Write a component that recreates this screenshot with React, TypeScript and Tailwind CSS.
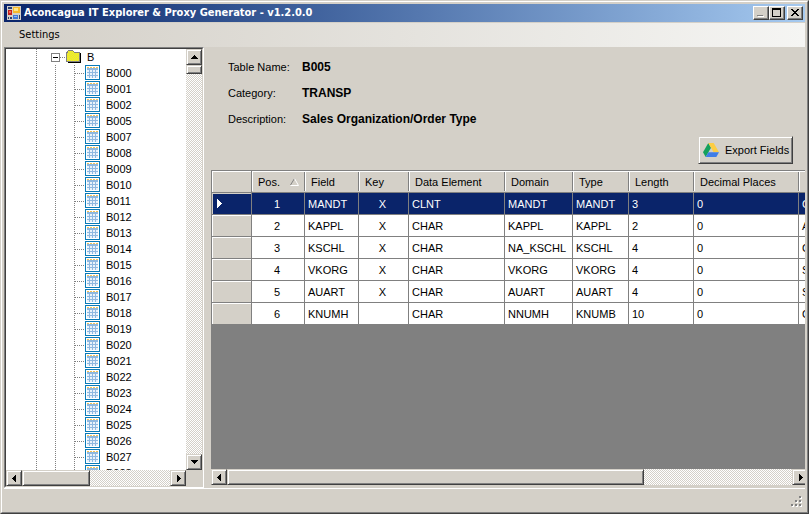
import type { ReactNode } from "react";

const tables = [
  "B000", "B001", "B002", "B005", "B007", "B008", "B009", "B010", "B011", "B012",
  "B013", "B014", "B015", "B016", "B017", "B018", "B019", "B020", "B021", "B022",
  "B023", "B024", "B025", "B026", "B027", "B028",
];

const columns = [
  { label: "Pos.", width: "w-[53px]", center: true },
  { label: "Field", width: "w-[54px]", center: false },
  { label: "Key", width: "w-[50px]", center: true },
  { label: "Data Element", width: "w-[96px]", center: false },
  { label: "Domain", width: "w-[68px]", center: false },
  { label: "Type", width: "w-[56px]", center: false },
  { label: "Length", width: "w-[65px]", center: false },
  { label: "Decimal Places", width: "w-[105px]", center: false },
  { label: "", width: "w-[120px]", center: false },
];

const rows = [
  ["1", "MANDT", "X", "CLNT", "MANDT", "MANDT", "3", "0", "C"],
  ["2", "KAPPL", "X", "CHAR", "KAPPL", "KAPPL", "2", "0", "A"],
  ["3", "KSCHL", "X", "CHAR", "NA_KSCHL", "KSCHL", "4", "0", "C"],
  ["4", "VKORG", "X", "CHAR", "VKORG", "VKORG", "4", "0", "S"],
  ["5", "AUART", "X", "CHAR", "AUART", "AUART", "4", "0", "S"],
  ["6", "KNUMH", "", "CHAR", "NNUMH", "KNUMB", "10", "0", "C"],
];

const details = [
  { label: "Table Name:", value: "B005" },
  { label: "Category:", value: "TRANSP" },
  { label: "Description:", value: "Sales Organization/Order Type" },
];

const raised =
  "border border-t-[#d4d0c8] border-l-[#d4d0c8] border-r-[#404040] border-b-[#404040] bg-[#d4d0c8] shadow-[inset_1px_1px_0_#fff,inset_-1px_-1px_0_#808080]";
const track = "bg-[repeating-conic-gradient(#fff_0_25%,#d4d0c8_0_50%)] bg-[length:2px_2px]";

function TitleButton({ label, children }: { label: string; children: ReactNode }) {
  return (
    <button
      type="button"
      aria-label={label}
      className="flex h-[14px] w-4 items-center justify-center border border-t-white border-l-white border-r-[#404040] border-b-[#404040] bg-[#d4d0c8] shadow-[inset_-1px_-1px_0_#808080]"
    >
      <svg width="12" height="10" viewBox="0 0 12 10" shapeRendering="crispEdges">
        {children}
      </svg>
    </button>
  );
}

const arrowPaths = {
  up: "M4 2h1v1h1v1h1v1h1v1H1V5h1V4h1V3h1z",
  down: "M1 2h7v1H7v1H6v1H5v1H4V5H3V4H2V3H1z",
  left: "M5 1h1v7H5V7H4V6H3V5H2V4h1V3h1V2h1z",
  right: "M3 1h1v1h1v1h1v1h1v1H6v1H5v1H4v1H3z",
};

function ArrowButton({ direction }: { direction: keyof typeof arrowPaths }) {
  return (
    <button
      type="button"
      aria-label={`Scroll ${direction}`}
      className={`flex size-4 shrink-0 items-center justify-center ${raised}`}
    >
      <svg width="9" height="9" viewBox="0 0 9 9" className="shrink-0" shapeRendering="crispEdges">
        <path d={arrowPaths[direction]} />
      </svg>
    </button>
  );
}

function AppIcon() {
  return (
    <svg width="14" height="14" viewBox="0 0 14 14" shapeRendering="crispEdges" className="shrink-0">
      <path fill="#d4d0c8" d="M0 0h14v14H0z" />
      <path fill="#2c3f70" d="M1 1h4v2H1zM1 11h1v2H1zM3 11h2v2H3zM12 9h1v4h-1z" />
      <path fill="#c8201c" d="M1 4h4v5H1z" />
      <path fill="#ee6a5c" d="M2 5h2v2H2z" />
      <path fill="#f6b92c" d="M6 1h7v6H6z" />
      <path fill="#fde48a" d="M7 2h4v3H7z" />
      <path fill="#3f78d8" d="M6 9h5v4H6z" />
      <path fill="#8fb8f4" d="M7 10h3v1H7z" />
    </svg>
  );
}

function FolderIcon() {
  return (
    <svg width="16" height="14" viewBox="0 0 16 14" shapeRendering="crispEdges" className="shrink-0">
      <defs>
        <pattern id="folder-fill" width="2" height="2" patternUnits="userSpaceOnUse">
          <path fill="#ffff00" d="M0 0h2v2H0z" />
          <path fill="#d8d460" d="M0 0h1v1H0zM1 1h1v1H1z" />
        </pattern>
      </defs>
      <path fill="#000" d="M14 3h1v10H2v-1h12z" />
      <path fill="#808080" d="M0 2h1V1h1V0h5v1h1v1h6v10H0z" />
      <path fill="url(#folder-fill)" d="M1 3h1V1h5v1h1v1h5v8H1z" />
    </svg>
  );
}

function TableIcon() {
  return (
    <svg width="15" height="15" viewBox="0 0 15 15" shapeRendering="crispEdges" className="shrink-0 self-start">
      <path fill="#0a7bb8" d="M0 0h15v15H0z" />
      <path fill="#fff" d="M1 1h13v13H1z" />
      <path fill="#eaf2fa" d="M2 5h11v8H2z" />
      <path fill="#8fb8e0" d="M2 3h11v2H2zM2 7h11v1H2zM2 10h11v1H2zM4 5h1v8H4zM7 5h1v8H7zM10 5h1v8h-1z" />
      <path fill="#f4c255" d="M2 2h2v1H2zM5 2h2v1H5zM8 2h2v1H8zM11 2h2v1h-2z" />
    </svg>
  );
}

function DriveIcon() {
  return (
    <svg width="16" height="14" viewBox="0 0 16 14" className="shrink-0">
      <path fill="#14a05c" d="M5.3 0L0 9.3 2.7 14 8 4.7z" />
      <path fill="#fdcd43" d="M5.3 0h5.4L16 9.3h-5.4z" />
      <path fill="#3f7de8" d="M5.4 9.3H16L13.3 14H2.7z" />
    </svg>
  );
}

const dotsDown = "bg-[repeating-linear-gradient(to_bottom,#808080_0_1px,transparent_1px_2px)]";
const dotsAcross = "bg-[repeating-linear-gradient(to_right,#808080_0_1px,transparent_1px_2px)]";

function TreeView() {
  return (
    <nav
      aria-label="Tables"
      className="flex w-[200px] shrink-0 flex-col border border-t-[#808080] border-l-[#808080] border-r-white border-b-white"
    >
      <div className="flex min-h-0 flex-1 flex-col border border-t-[#404040] border-l-[#404040] border-r-[#d4d0c8] border-b-[#d4d0c8]">
        <div className="flex min-h-0 flex-1">
          <div className="flex min-w-0 flex-1 overflow-hidden bg-white pl-[30px]">
            <div className={`w-px shrink-0 ${dotsDown}`} />
            <ul role="tree" className="ml-[14px]">
              <li role="treeitem" aria-expanded="true">
                <div className="flex h-4 items-center">
                  <button
                    type="button"
                    aria-label="Collapse B"
                    className="flex size-[9px] items-center justify-center border border-[#808080] bg-white"
                  >
                    <span className="h-px w-[5px] bg-black" />
                  </button>
                  <span className={`h-px w-[6px] ${dotsAcross}`} />
                  <FolderIcon />
                  <span className="pl-[5px]">B</span>
                </div>
                <div className="flex pl-1">
                  <div className={`w-px ${dotsDown}`} />
                  <ul role="group" className="ml-[18px] flex">
                    <li role="none" className={`w-px ${dotsDown}`} />
                    <li role="none">
                      <ul role="group">
                        {tables.map((name) => (
                          <li key={name} role="treeitem" className="flex h-4 items-center">
                            <span className={`h-px w-[10px] ${dotsAcross}`} />
                            <TableIcon />
                            <span className="pl-[6px]">{name}</span>
                          </li>
                        ))}
                      </ul>
                    </li>
                  </ul>
                </div>
              </li>
            </ul>
          </div>
          <div className={`flex w-4 shrink-0 flex-col ${track}`}>
            <ArrowButton direction="up" />
            <div className={`h-[9px] ${raised}`} />
            <div className="flex-1" />
            <ArrowButton direction="down" />
          </div>
        </div>
        <div className="flex h-4 shrink-0">
          <div className={`flex flex-1 ${track}`}>
            <ArrowButton direction="left" />
            <div className={`w-[68px] ${raised}`} />
            <div className="flex-1" />
            <ArrowButton direction="right" />
          </div>
          <div className="w-4 bg-[#d4d0c8]" />
        </div>
      </div>
    </nav>
  );
}

function FieldGrid() {
  return (
    <div className="flex min-h-0 flex-1 flex-col overflow-hidden">
      <div className="min-h-0 flex-1 overflow-hidden border-t border-l border-[#808080] bg-[#808080]">
        <table className="w-[707px] table-fixed border-separate border-spacing-0">
          <thead>
            <tr className="h-[22px]">
              <td className="w-10 border-r border-b border-[#808080] bg-[#d4d0c8] p-0 shadow-[inset_1px_1px_0_#fff]" />
              {columns.map((column, index) => (
                <th
                  key={index}
                  scope="col"
                  className={`${column.width} border-b border-[#808080] bg-[#d4d0c8] p-0 text-left font-normal shadow-[inset_0_1px_0_#fff]`}
                >
                  <div className="flex h-[19px] items-center justify-between border-r border-[#808080] pr-[5px] pl-[6px] shadow-[inset_1px_0_0_#fff]">
                    <span className="whitespace-nowrap">{column.label}</span>
                    {index === 0 && (
                      <svg width="9" height="8" viewBox="0 0 9 8" aria-label="Sorted ascending">
                        <path d="M4.5 0.5L0.5 7" stroke="#808080" fill="none" />
                        <path d="M4.5 0.5L8.5 7.5H0.5" stroke="#fff" fill="none" />
                      </svg>
                    )}
                  </div>
                </th>
              ))}
            </tr>
          </thead>
          <tbody>
            {rows.map((row, rowIndex) => (
              <tr
                key={row[0]}
                aria-selected={rowIndex === 0}
                className={rowIndex === 0 ? "h-[22px] bg-[#0a246a] text-white" : "h-[22px] bg-white"}
              >
                <td
                  className={
                    rowIndex === 0
                      ? "border-r border-b border-[#808080] p-0 shadow-[inset_1px_1px_0_#d4d0c8]"
                      : "border-r border-b border-[#808080] bg-[#d4d0c8] p-0 shadow-[inset_1px_1px_0_#fff]"
                  }
                >
                  {rowIndex === 0 && (
                    <svg width="5" height="9" viewBox="0 0 5 9" shapeRendering="crispEdges" className="ml-[5px]">
                      <path fill="#fff" d="M0 0h1v1h1v1h1v1h1v1h1v1H4v1H3v1H2v1H1v1H0z" />
                    </svg>
                  )}
                </td>
                {row.map((cell, index) => (
                  <td
                    key={index}
                    className={
                      columns[index].center
                        ? "border-r border-b border-[#808080] py-0 pr-[2px] pl-0 text-center"
                        : "border-r border-b border-[#808080] py-0 pr-0 pl-[3px]"
                    }
                  >
                    {cell}
                  </td>
                ))}
              </tr>
            ))}
          </tbody>
        </table>
      </div>
      <div className={`-mr-[3px] flex h-4 shrink-0 ${track}`}>
        <ArrowButton direction="left" />
        <div className={`w-[417px] ${raised}`} />
        <div className="flex-1" />
        <ArrowButton direction="right" />
      </div>
    </div>
  );
}

export default function App() {
  return (
    <div className="h-screen overflow-hidden border border-t-[#d4d0c8] border-l-[#d4d0c8] border-r-[#404040] border-b-[#404040] bg-[#d4d0c8] font-['Liberation_Sans',Arial,sans-serif] text-[11px] leading-[16px] text-black">
      <div className="flex h-full flex-col border border-t-white border-l-white border-r-[#808080] border-b-[#808080] p-[2px]">
        <header className="flex h-[18px] shrink-0 items-center bg-linear-to-r from-[#0a246a] to-[#a6caf0] pr-[2px] pl-[3px]">
          <AppIcon />
          <h1 className="flex-1 pl-[3px] font-['DejaVu_Sans_Condensed','DejaVu_Sans',sans-serif] text-[11px] font-bold whitespace-nowrap text-white">
            Aconcagua IT Explorer &amp; Proxy Generator - v1.2.0.0
          </h1>
          <TitleButton label="Minimize">
            <path fill="#fff" d="M3 8h6v1H3z" />
            <path fill="#808080" d="M2 7h6v1H2z" />
          </TitleButton>
          <TitleButton label="Maximize">
            <path fillRule="evenodd" d="M1 0h9v9H1zM2 2v6h7V2z" />
          </TitleButton>
          <div className="w-[2px]" />
          <TitleButton label="Close">
            <path d="M2 1h2v1h1v1h2V2h1V1h2v1H9v1H8v1H7v1h1v1h1v1h1v1H8V7H7V6H5v1H4v1H2V7h1V6h1V5h1V4H4V3H3V2H2z" />
          </TitleButton>
        </header>
        <div className="mt-px flex h-6 shrink-0 items-center bg-linear-to-r from-[#d4d0c8] to-[#f5f5f3] pl-[15px]">
          <button type="button" className="font-['DejaVu_Sans_Condensed','DejaVu_Sans',sans-serif] text-[11px]">
            Settings
          </button>
        </div>
        <div className="flex min-h-0 flex-1">
          <TreeView />
          <main className="flex min-w-0 flex-1 flex-col pt-3 pb-[3px] pl-[7px]">
            <dl className="grid grid-cols-[74px_1fr] gap-y-[10px] pl-[17px]">
              {details.map((item) => (
                <div key={item.label} className="contents">
                  <dt>{item.label}</dt>
                  <dd className="text-xs leading-[16px] font-bold">{item.value}</dd>
                </div>
              ))}
            </dl>
            <div className="mt-[9px] mb-[6px] flex justify-end pr-3">
              <button type="button" className={`flex h-7 w-[95px] items-center gap-[6px] pl-1 ${raised}`}>
                <DriveIcon />
                <span className="whitespace-nowrap">Export Fields</span>
              </button>
            </div>
            <FieldGrid />
          </main>
        </div>
        <footer className="flex h-[22px] shrink-0 items-end justify-end border-t border-white pr-[2px] pb-[2px]">
          <svg width="12" height="12" viewBox="0 0 12 12" shapeRendering="crispEdges" aria-hidden="true">
            <path fill="#fff" d="M9 1h2v2H9zM5 5h2v2H5zM9 5h2v2H9zM1 9h2v2H1zM5 9h2v2H5zM9 9h2v2H9z" />
            <path fill="#808080" d="M8 0h2v2H8zM4 4h2v2H4zM8 4h2v2H8zM0 8h2v2H0zM4 8h2v2H4zM8 8h2v2H8z" />
          </svg>
        </footer>
      </div>
    </div>
  );
}
